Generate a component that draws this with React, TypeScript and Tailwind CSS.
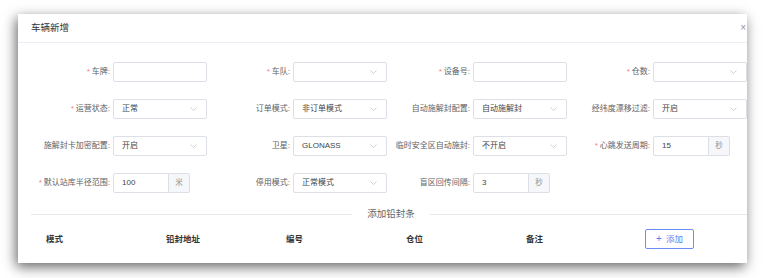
import React from "react";

type Field = {
  label: string;
  required?: boolean;
  kind: "text" | "select" | "addon";
  value?: string;
  unit?: string;
};

const rows: Field[][] = [
  [
    { label: "车牌", required: true, kind: "text" },
    { label: "车队", required: true, kind: "select" },
    { label: "设备号", required: true, kind: "text" },
    { label: "仓数", required: true, kind: "select" },
  ],
  [
    { label: "运营状态", required: true, kind: "select", value: "正常" },
    { label: "订单模式", kind: "select", value: "非订单模式" },
    { label: "自动施解封配置", kind: "select", value: "自动施解封" },
    { label: "经纬度漂移过滤", kind: "select", value: "开启" },
  ],
  [
    { label: "施解封卡加密配置", kind: "select", value: "开启" },
    { label: "卫星", kind: "select", value: "GLONASS" },
    { label: "临时安全区自动施封", kind: "select", value: "不开启" },
    { label: "心跳发送周期", required: true, kind: "addon", value: "15", unit: "秒" },
  ],
  [
    { label: "默认站库半径范围", required: true, kind: "addon", value: "100", unit: "米" },
    { label: "停用模式", kind: "select", value: "正常模式" },
    { label: "盲区回传间隔", kind: "addon", value: "3", unit: "秒" },
  ],
];

const columns = ["模式", "铅封地址", "编号", "仓位", "备注"];

function Chevron() {
  return (
    <svg width="7" height="4" viewBox="0 0 7 4" className="shrink-0">
      <path d="M0.5 0.5 L3.5 3.5 L6.5 0.5" fill="none" stroke="#c0c4cc" strokeWidth="0.8" />
    </svg>
  );
}

function Control({ f }: { f: Field }) {
  if (f.kind === "addon") {
    return (
      <div className="flex h-[20px] w-[77px]">
        <div className="flex-1 flex items-center pl-[8px] border border-[#dcdfe6] rounded-l-[2px] text-[8px] text-[#444]">
          {f.value}
        </div>
        <div className="w-[21px] flex items-center justify-center border border-l-0 border-[#dcdfe6] rounded-r-[2px] bg-[#f5f7fa] text-[7.5px] text-[#909399]">
          {f.unit}
        </div>
      </div>
    );
  }
  return (
    <div className="h-[20px] w-[94px] flex items-center justify-between pl-[8px] pr-[9px] border border-[#dcdfe6] rounded-[2px] text-[8px] text-[#444]">
      <span>{f.value ?? ""}</span>
      {f.kind === "select" && <Chevron />}
    </div>
  );
}

export default function App() {
  return (
    <div
      className="w-[767px] h-[278px] bg-white pt-[14px] pl-[18px]"
      style={{ fontFamily: '"Liberation Sans","Noto Sans CJK SC",sans-serif' }}
    >
      <div className="w-[729px] h-[249px] bg-white overflow-hidden shadow-[-2px_4px_12px_rgba(0,0,0,0.6)]">
        {/* header */}
        <div className="h-[29px] flex items-center justify-between border-b border-[#ebeef5] pl-[13px]">
          <span className="text-[9.5px] text-[#333]">车辆新增</span>
          <span className="text-[10px] text-[#909399] mr-[1px] leading-none">×</span>
        </div>

        {/* form */}
        <div className="w-[720px] ml-[13px] pt-[19px] flex flex-col gap-[17px]">
          {rows.map((row, ri) => (
            <div key={ri} className="flex h-[20px]">
              {row.map((f, fi) => (
                <div key={fi} className="w-[180px] flex items-center">
                  <div className="w-[82px] pr-[3px] flex items-center justify-end text-[8px] text-[#606266] whitespace-nowrap">
                    {f.required && <span className="text-[#f56c6c] mr-[2px] text-[7px]">*</span>}
                    {f.label}:
                  </div>
                  <Control f={f} />
                </div>
              ))}
            </div>
          ))}
        </div>

        {/* divider */}
        <div className="w-[720px] ml-[13px] mt-[14px] flex items-center">
          <div className="flex-1 h-px bg-[#e8e8e8]" />
          <span className="px-[15px] text-[9.5px] text-[#666]">添加铅封条</span>
          <div className="flex-1 h-px bg-[#e8e8e8]" />
        </div>

        {/* table header */}
        <div className="w-[720px] ml-[13px] mt-[6px] flex items-center h-[24px]">
          {columns.map((c) => (
            <div key={c} className="w-[120px] pl-[15px] text-[8.5px] font-bold text-[#333]">
              {c}
            </div>
          ))}
          <div className="w-[120px] pl-[14px]">
            <button className="h-[20px] w-[49px] border border-[#6d8ff5] rounded-[2px] text-[8.5px] text-[#5b7ff0] flex items-center justify-center gap-[4px]">
              <span className="text-[10px] leading-none">+</span>
              <span>添加</span>
            </button>
          </div>
        </div>
      </div>
    </div>
  );
}
